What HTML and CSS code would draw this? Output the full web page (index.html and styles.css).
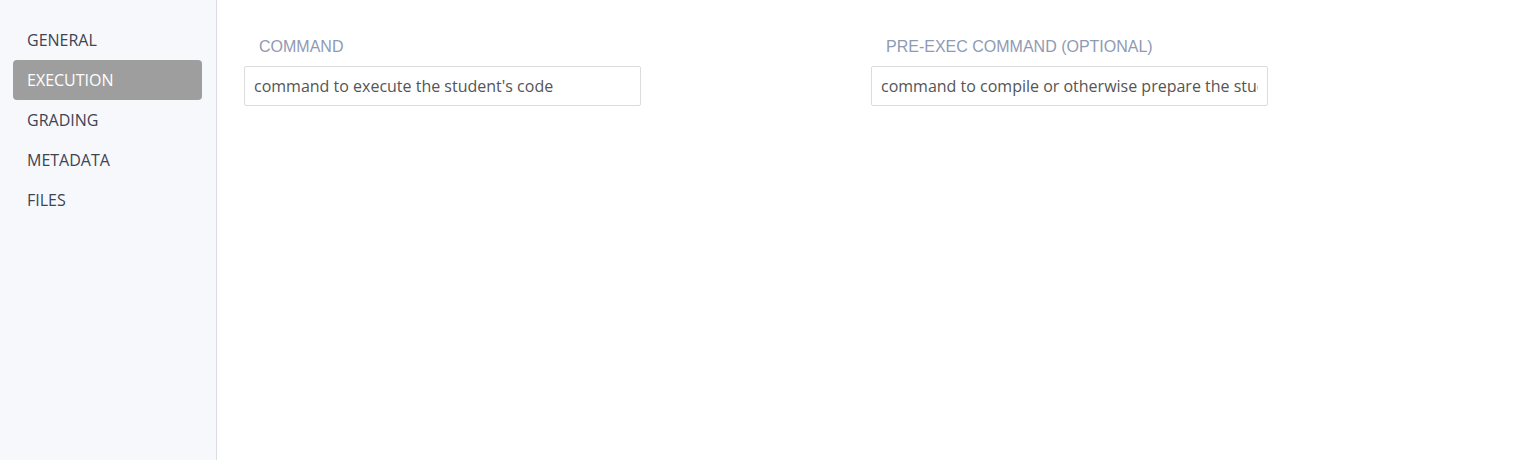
FILE: index.html
```
<!DOCTYPE html>
<html>
<head>
<meta charset="utf-8">
<link rel="stylesheet" href="styles.css">
</head>
<body>
<div class="layout">
  <nav class="sidebar">
    <div class="nav-item">GENERAL</div>
    <div class="nav-item active">EXECUTION</div>
    <div class="nav-item">GRADING</div>
    <div class="nav-item">METADATA</div>
    <div class="nav-item">FILES</div>
  </nav>
  <main class="content">
    <div class="field">
      <label class="label">COMMAND</label>
      <input class="input" type="text" placeholder="command to execute the student's code">
    </div>
    <div class="field">
      <label class="label">PRE-EXEC COMMAND (OPTIONAL)</label>
      <input class="input" type="text" placeholder="command to compile or otherwise prepare the student's code">
    </div>
  </main>
</div>
</body>
</html>
```
FILE: styles.css
```
html, body {
  margin: 0;
  padding: 0;
  height: 100%;
  background: #ffffff;
}
.layout {
  display: flex;
  height: 460px;
}
.sidebar {
  width: 217px;
  box-sizing: border-box;
  background: #f7f8fc;
  border-right: 1px solid #dcdde2;
  padding: 20px 14px 0 13px;
  flex-shrink: 0;
}
.nav-item {
  height: 40px;
  line-height: 40px;
  padding-left: 14px;
  border-radius: 4px;
  font-family: "Open Sans", sans-serif;
  font-size: 16px;
  color: #3d4454;
}
.nav-item.active {
  background: #9e9e9e;
  color: #ffffff;
}
.content {
  flex: 1;
  display: grid;
  grid-template-columns: 627px 397px;
  align-items: start;
  align-content: start;
  padding: 37px 0 0 27px;
}
.field {
  display: flex;
  flex-direction: column;
  width: 397px;
}
.label {
  font-family: "Liberation Sans", Arial, sans-serif;
  font-size: 16px;
  color: #8f9ab4;
  padding-left: 15px;
  line-height: 20px;
  margin-bottom: 9px;
}
.input {
  box-sizing: border-box;
  width: 397px;
  height: 40px;
  border: 1px solid #dcdcdc;
  border-radius: 2px;
  padding: 0 9px;
  font-family: "Open Sans", sans-serif;
  font-size: 16px;
  color: #555;
  outline: none;
  margin: 0;
}
.input::placeholder {
  color: #555;
  opacity: 1;
}
```
